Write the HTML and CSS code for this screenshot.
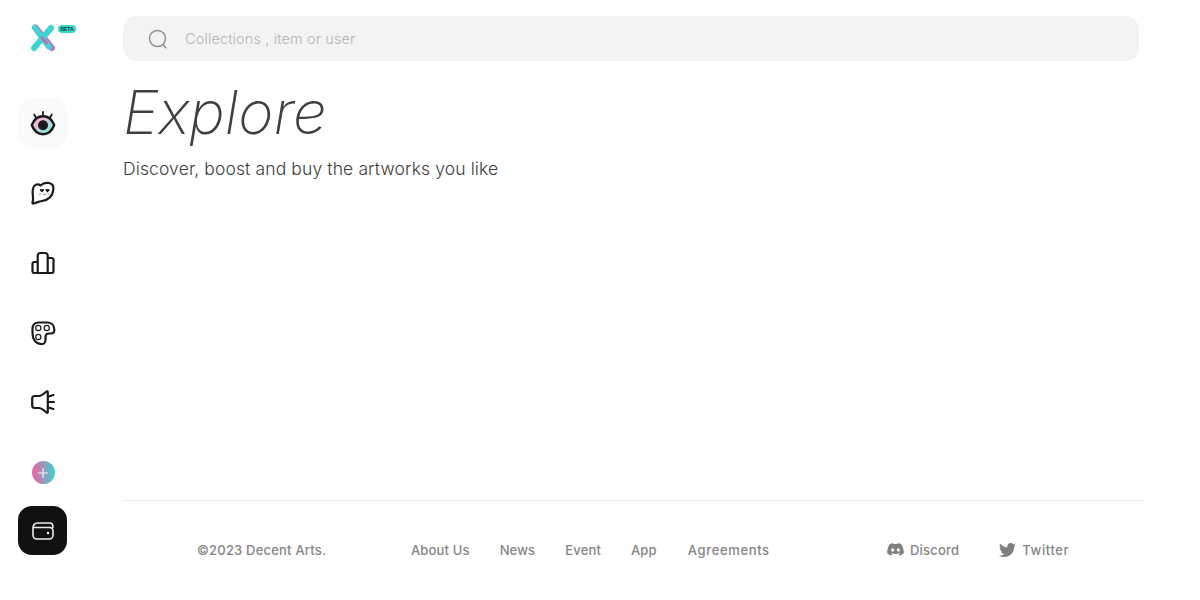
FILE: index.html
```html
<!DOCTYPE html>
<html lang="en">
<head>
<meta charset="utf-8">
<title>Explore</title>
<link rel="stylesheet" href="styles.css">
</head>
<body>
<div class="app">
  <aside class="sidebar">
    <a class="logo" href="#">
      <svg class="logo-x" width="26" height="28" viewBox="0 0 26 28">
        <path d="M5.500 3.500 L22 24" stroke="#b678c8" stroke-width="6" stroke-linecap="round" fill="none"/>
        <path d="M4.500 3.500 L19 23" stroke="#45d3d0" stroke-width="5.500" stroke-linecap="round" fill="none"/>
        <path d="M4 24 L21 4" stroke="#3ed4cf" stroke-width="6" stroke-linecap="round" fill="none"/>
        <path d="M11.500 13 L17 20" stroke="#d85fb5" stroke-width="2.500" fill="none"/>
      </svg>
      <span class="beta">BETA</span>
    </a>
    <nav class="nav">
      <a class="nav-item active" href="#">
        <svg width="26" height="26" viewBox="0 0 26 26">
          <defs><linearGradient id="eyeg" x1="0" x2="1" y1="0" y2="1"><stop offset="0.250" stop-color="#f7b4d6"/><stop offset="0.750" stop-color="#8eeae2"/></linearGradient></defs>
          <path d="M1.800 15 C4 9.500 8 6.300 13 6.300 C18 6.300 22 9.500 24.200 15 C22 20.800 18 24.200 13 24.200 C8 24.200 4 20.800 1.800 15 Z" fill="url(#eyeg)" stroke="#1a1a1a" stroke-width="2.400" stroke-linejoin="round"/>
          <circle cx="13" cy="15.300" r="5" fill="#1a1a1a"/>
          <path d="M13 1.800V4.800M4.200 4.500 6 7.500M21.800 4.500 20 7.500" stroke="#1a1a1a" stroke-width="1.800" stroke-linecap="round" fill="none"/>
        </svg>
      </a>
      <a class="nav-item" href="#">
        <svg width="26" height="26" viewBox="0 0 26 26" fill="none">
          <path d="M10.500 5.500 C12.500 3.500 16 2.500 19 3 C22.500 3.600 23.800 6.500 23.300 10 C22.500 16 18 20 12 21 C9 21.500 6 22.800 3.500 23.500 C2.500 23.800 2.200 23 2.600 22 C3.200 20.500 3.200 19 3 17 C2.500 14 2.300 11 3 8.500 C3.800 5 7.500 3.200 10.500 5.500 Z" stroke="#1a1a1a" stroke-width="2.200" stroke-linejoin="round"/>
          <path d="M12 9.300 C13 8.500 14.500 9.400 14 10.500 L12 12.600 L10 10.500 C9.500 9.400 11 8.500 12 9.300 Z M17.500 9.300 C18.500 8.500 20 9.400 19.500 10.500 L17.500 12.600 L15.500 10.500 C15 9.400 16.500 8.500 17.500 9.300 Z" fill="#1a1a1a"/>
          <path d="M13 14 C13.700 15 15.200 15 16 14" stroke="#777" stroke-width="1" stroke-linecap="round"/>
          <circle cx="10" cy="14.300" r="1.300" fill="#cfcfcf"/><circle cx="18.700" cy="14.300" r="1.300" fill="#cfcfcf"/>
        </svg>
      </a>
      <a class="nav-item" href="#">
        <svg width="24" height="24" viewBox="0 0 24 24" fill="none">
          <path d="M6.700 11H3.500A2 2 0 0 0 1.500 13V20A2 2 0 0 0 3.500 22H20.500A2 2 0 0 0 22.500 20V9A2 2 0 0 0 20.500 7H16.700M6.700 22V4.500A2.500 2.500 0 0 1 9.200 2H14.200A2.500 2.500 0 0 1 16.700 4.500V22" stroke="#1a1a1a" stroke-width="2.200" stroke-linejoin="round"/>
        </svg>
      </a>
      <a class="nav-item" href="#">
        <svg width="26" height="26" viewBox="0 0 26 26" fill="none">
          <path d="M9 2.500H17C21.500 2.500 24.300 5.500 24.300 9.500V10.500C24.300 12.500 23 13.500 21 13.500H19C17 13.500 15.500 15 15.500 17V20C15.500 23 13.500 24.300 11 24C5.500 23.500 2.500 19 2.500 13V9C2.500 5 5 2.500 9 2.500Z" stroke="#1a1a1a" stroke-width="2.200" stroke-linejoin="round"/>
          <circle cx="8.300" cy="8" r="2.600" stroke="#1a1a1a" stroke-width="1.200"/>
          <circle cx="16.700" cy="8" r="2.600" stroke="#1a1a1a" stroke-width="1.200"/>
          <circle cx="8.300" cy="17" r="2.600" stroke="#1a1a1a" stroke-width="1.200"/>
        </svg>
      </a>
      <a class="nav-item" href="#">
        <svg width="24" height="26" viewBox="0 1 24 26" fill="none">
          <path d="M3.500 7H8C10.500 7 13 4.500 15.500 2.500C16.200 2 16.800 2.300 16.800 3V23C16.800 23.800 16.200 24 15.500 23.500C13 21.500 10.500 19 8 19H3.500C2 19 1.200 18 1.200 16.500V9.500C1.200 8 2 7 3.500 7Z" stroke="#1a1a1a" stroke-width="2.200" stroke-linejoin="round"/>
          <path d="M17.500 7.500 22.500 6M17.500 13H23M17.500 18.500 22.500 20" stroke="#1a1a1a" stroke-width="2" stroke-linecap="round"/>
        </svg>
      </a>
      <a class="nav-item" href="#"><span class="plus"><svg width="12" height="12" viewBox="0 0 12 12"><path d="M6 1V11M1 6H11" stroke="#fff" stroke-width="1.100" opacity=".9"/></svg></span></a>
    </nav>
    <a class="wallet" href="#">
      <svg width="22" height="18" viewBox="0 0 22 18" fill="none">
        <path d="M20.800 5.500V4A3 3 0 0 0 17.800 1H5.500A4.500 4.500 0 0 0 1 5.500V13A4 4 0 0 0 5 17H17A4 4 0 0 0 21 13V9A3.500 3.500 0 0 0 17.500 5.500H2" stroke="#eee" stroke-width="1.600" stroke-linecap="round"/>
        <circle cx="16" cy="11" r="1.200" fill="#fff"/>
      </svg>
    </a>
  </aside>
  <div class="main">
    <div class="top">
      <label class="search">
        <svg class="search-icon" width="20" height="20" viewBox="0 0 20 20" fill="none">
          <circle cx="9.500" cy="9.500" r="8" stroke="#8e8e8e" stroke-width="1.500"/>
          <path d="M15 15.500 17.800 18.800" stroke="#8e8e8e" stroke-width="1.500" stroke-linecap="round"/>
        </svg>
        <input class="search-input" type="text" placeholder="Collections , item or user">
      </label>
    </div>
    <header class="hero">
      <h1 class="title">Explore</h1>
      <p class="subtitle">Discover, boost and buy the artworks you like</p>
    </header>
    <footer class="footer">
      <span class="copy">©2023 Decent Arts.</span>
      <nav class="links">
        <a href="#">About Us</a>
        <a href="#">News</a>
        <a href="#">Event</a>
        <a href="#">App</a>
        <a class="link-wide" href="#">Agreements</a>
      </nav>
      <div class="social">
        <a href="#">
          <svg width="17" height="13" viewBox="0 0 17 13"><path d="M14.300 1.200C13.200.7 12.100.3 10.900.1L10.400 1.100C9.100.9 7.900.9 6.600 1.100L6.100.1C4.900.3 3.800.7 2.700 1.200.6 4.400 0 7.500.3 10.600 1.700 11.700 3.100 12.300 4.400 12.700L5.400 11.100C4.800 10.900 4.300 10.600 3.800 10.300L4.100 10C6.800 11.300 10.200 11.300 12.900 10L13.200 10.300C12.700 10.600 12.200 10.900 11.600 11.100L12.600 12.700C13.900 12.300 15.300 11.700 16.700 10.600 17.100 7 16 3.900 14.300 1.200ZM5.700 8.700C4.900 8.700 4.200 8 4.200 7 4.200 6.100 4.900 5.300 5.700 5.300 6.600 5.300 7.300 6.100 7.200 7 7.200 8 6.600 8.700 5.700 8.700ZM11.300 8.700C10.500 8.700 9.800 8 9.800 7 9.800 6.100 10.500 5.300 11.300 5.300 12.200 5.300 12.900 6.100 12.800 7 12.800 8 12.200 8.700 11.300 8.700Z" fill="#808080"/></svg>
          Discord
        </a>
        <a class="social-wide" href="#">
          <svg width="17" height="14" viewBox="0 0 17 14"><path d="M17 1.700C16.400 2 15.700 2.200 15 2.300 15.700 1.800 16.300 1.100 16.500.3 15.800.7 15.100 1 14.300 1.200 13.700.5 12.800 0 11.700 0 9.800 0 8.200 1.600 8.200 3.600 8.200 3.900 8.300 4.100 8.300 4.400 5.400 4.200 2.800 2.800 1.200.6.900 1.200.700 1.800.700 2.400.700 3.700 1.300 4.800 2.300 5.400 1.700 5.400 1.200 5.200.700 5 .7 6.700 1.900 8.100 3.500 8.400 3.200 8.500 2.900 8.500 2.600 8.500 2.400 8.500 2.200 8.500 2 8.500 2.400 9.900 3.700 10.900 5.300 10.900 4.100 11.900 2.500 12.400.9 12.400.6 12.400.3 12.400 0 12.400 1.600 13.400 3.400 14 5.300 14 11.700 14 15.300 8.700 15.300 4 15.300 3.900 15.300 3.700 15.300 3.600 16 3.100 16.500 2.500 17 1.700Z" fill="#808080"/></svg>
          Twitter
        </a>
      </div>
    </footer>
  </div>
</div>
</body>
</html>
```

FILE: styles.css
```css
* { box-sizing: border-box; }
html, body { margin: 0; padding: 0; background: #fff; }
body { font-family: "Inter", "Lato", "Liberation Sans", sans-serif; color: #3c3c3c; }
a { color: inherit; text-decoration: none; }

.app { display: flex; height: 600px; overflow: hidden; }

.sidebar { width: 123px; flex: none; display: flex; flex-direction: column; align-items: flex-start; padding: 23px 0 45px 18px; }
.logo { position: relative; display: block; width: 50px; height: 30px; margin-bottom: 45px; }
.logo-x { position: absolute; left: 12px; top: 1px; }
.beta { position: absolute; left: 40px; top: 2px; width: 18px; height: 8px; border-radius: 4px; background: #3cd6c8; color: #0d3c3a; font: 700 5px/8px "Liberation Sans", sans-serif; text-align: center; }

.nav { display: flex; flex-direction: column; gap: 20px; }
.nav-item { width: 50px; height: 50px; display: flex; align-items: center; justify-content: center; border-radius: 16px; }
.nav-item.active { background: #fafafa; }
.plus { width: 23px; height: 23px; margin-top: -1px; border-radius: 50%; background: linear-gradient(90deg, #f55fa6, #3ad3cf); display: flex; align-items: center; justify-content: center; }
.wallet { width: 49px; height: 49px; margin-top: 8px; border-radius: 14px; background: #111; display: flex; align-items: center; justify-content: center; }

.main { width: 1021px; flex: none; display: flex; flex-direction: column; }
.top { padding: 16px 5px 0 0; }
.search { height: 45px; display: flex; align-items: center; gap: 17px; padding-left: 25px; border-radius: 14px; background: #f3f3f3; }
.search-icon { flex: none; }
.search-input { flex: 1; border: 0; background: none; outline: 0; padding: 0 0 1px; font: 300 14.5px "Inter", sans-serif; letter-spacing: .12px; color: #333; }
.search-input::placeholder { color: #b5b5b5; opacity: 1; }

.hero { flex: 1; }
.title { margin: 16px 0 0; font: italic 200 60px/70px "Inter", sans-serif; letter-spacing: 0; color: #3f3f3f; }
.subtitle { margin: 10px 0 0; font: 300 17.5px/24px "Inter", sans-serif; letter-spacing: .12px; color: #3c3c3c; }

.footer { height: 100px; border-top: 1px solid #e9e9e9; display: flex; align-items: center; padding: 0 0 2px 74px; font-size: 13px; font-weight: 500; color: #858585; letter-spacing: .2px; }
.copy { width: 214px; flex: none; }
.links { display: flex; gap: 30px; width: 476px; flex: none; letter-spacing: .15px; }
.link-wide { letter-spacing: .65px; margin-left: 1px; }
.social { display: flex; gap: 40px; }
.social a { display: flex; align-items: center; gap: 6px; }
.social .social-wide { letter-spacing: .6px; }
```
